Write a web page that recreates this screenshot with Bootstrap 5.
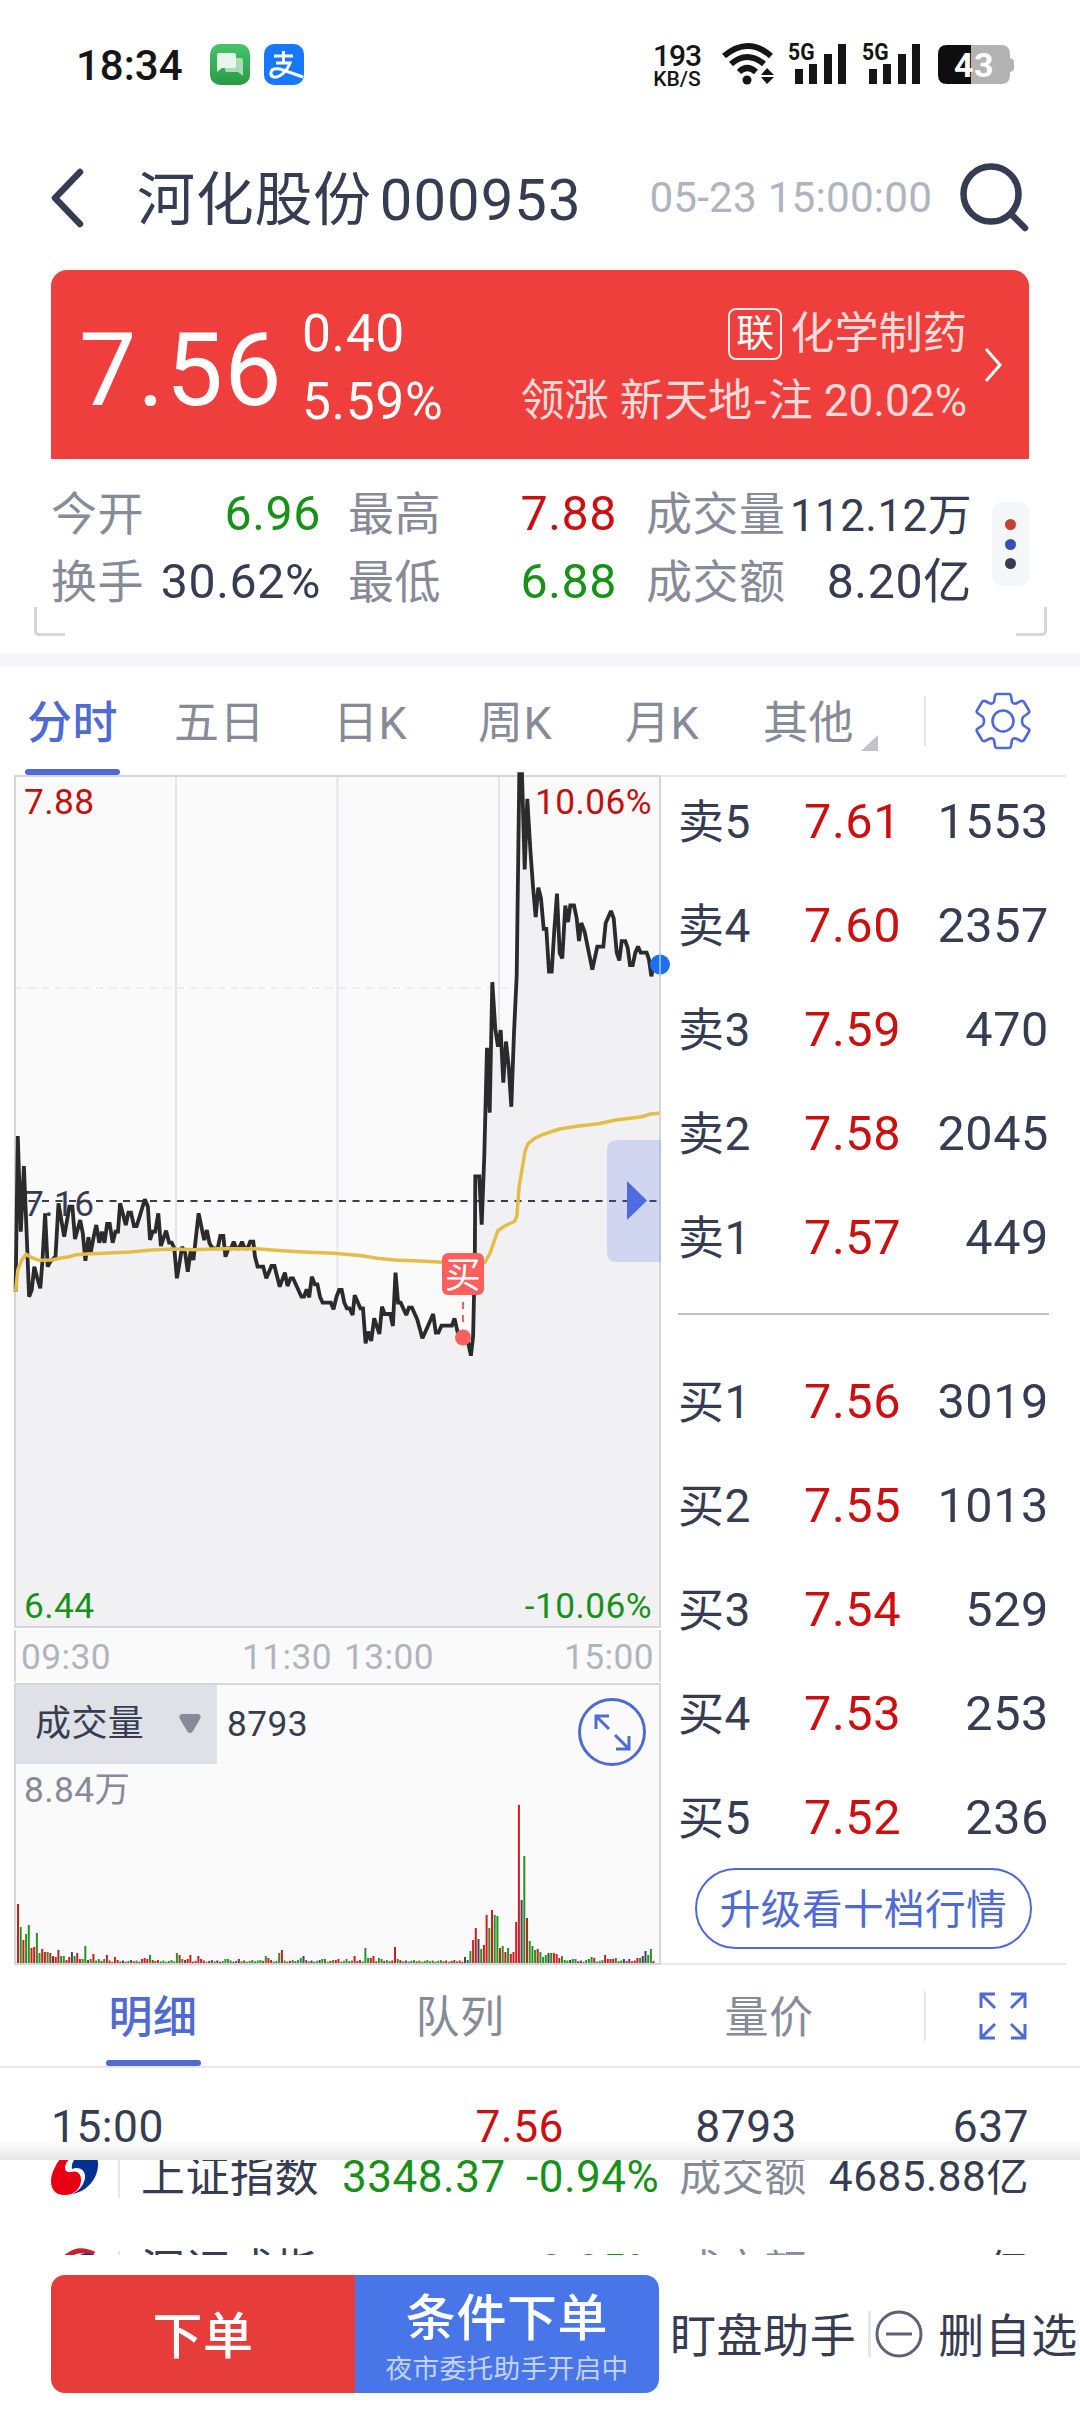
<!DOCTYPE html>
<html lang="zh-CN">
<head>
<meta charset="utf-8">
<meta name="viewport" content="width=device-width, initial-scale=1">
<title>河化股份 000953</title>
<link href="https://cdn.jsdelivr.net/npm/bootstrap@5.3.0/dist/css/bootstrap.min.css" rel="stylesheet">
<style>
:root{--ink:#363c52;--mute:#878b98;--pale:#b0b4be;--rise:#cd0f0f;--fall:#179117;--accent:#4f6bd3;}
*{letter-spacing:.012em}
body{width:1080px;height:2414px;overflow:hidden;background:#fff;color:var(--ink);font-family:Roboto,"Noto Sans CJK SC",sans-serif;font-size:45px;line-height:1;white-space:nowrap;}
svg{display:block;flex:none;overflow:visible}
svg text{font-family:Roboto,"Noto Sans CJK SC",sans-serif}
.c-rise{color:var(--rise)}.c-fall{color:var(--fall)}.c-mute{color:var(--mute)}.c-pale{color:var(--pale)}.c-accent{color:var(--accent)}
.statusbar{height:128px;padding:38px 63px 0 76px;color:#151515}
.clock{font:500 42px/55px Roboto,sans-serif;width:134px;letter-spacing:0}
.netrate{font:500 30px/26px Roboto,sans-serif;width:50px;padding-top:5px;margin-right:20px}
.netrate span{letter-spacing:-1px}
.netrate .unit{font-size:21px;line-height:21px;letter-spacing:0}
.titlebar{height:142px;padding:0 50px 3px 49px}
.stock-title{font-size:58px;margin-left:53px;width:513px;padding-top:4px}
.stock-title span{letter-spacing:.018em}
.stamp{font-size:42.3px;width:309px;letter-spacing:.004em;padding-top:1px}
.quote{height:189px;margin:0 51px;background:#ee3f3d;border-radius:16px 16px 0 0;padding:6px 25px 0 28px}
.price-now{font-size:102px;width:223px;padding-top:5px}
.price-diff{font-size:51.5px;line-height:68px}
.sector{font-size:44.2px;line-height:67px;color:rgba(255,255,255,.82);margin-right:17px}
.sector span{letter-spacing:0}
.link-tag{border:2px solid rgba(255,255,255,.9);border-radius:8px;width:54px;height:52px;font-size:38px;line-height:46px;margin:-1px 8px 0 0;color:#fff}
.facts{height:194px;padding:21px 51px 0;position:relative}
.facts .pair{font-size:48.3px;line-height:68px}
.facts .pair>span:first-child{font-size:46px;color:var(--mute)}
.fw-1{width:270px}.fw-2{width:269px;margin-left:27px}.fw-3{width:326px;margin-left:29px}
.morebox{width:37px;height:84px;border-radius:9px;background:#f4f6f8;margin:22px 0 0 20px;padding:17px 0}
.dotmark{width:11px;height:11px;border-radius:50%}
.bracket{position:absolute;bottom:17px;width:31px;height:29px;border:3px solid #d5d6dc;border-top:0}
.bracket.lf{left:34px;border-right:0;border-radius:0 0 0 5px}.bracket.rt{right:33px;border-left:0;border-radius:0 0 5px 0}
.band{height:14px;background:#f6f7f9}
.chart-tabs{height:108px;color:var(--mute);padding-left:27px;display:grid;grid-template-columns:147px 159px 145px 147px 138px 161px 52px 1fr;align-items:center}
.chart-tabs>span,.detail-tabs>span{height:100%;display:flex;align-items:center;justify-content:center;position:relative;padding-top:5px}
.chart-tabs>span{justify-content:start}
.picked{color:var(--accent);font-weight:500}
.picked::after{content:"";position:absolute;bottom:0;left:-2px;width:95px;height:6px;border-radius:3px;background:var(--accent)}
.vrule{width:2px;height:41px;background:#e6e7ea}
.market{height:1190px;padding:0 14px}
.left-pane{width:647px}
.times{height:52px;margin:2px 0 1px;border:solid #d5d6dc;border-width:0 2px;background:#fafafa;color:var(--pale);font-size:35.3px;padding:4px 5px 0 5px}
.volume{height:282px;border:2px solid #d5d6dc;background:#fafafa;position:relative}
.vol-pick{width:201px;height:79px;background:#e0e1e6;padding:0 16px 1px 19px;font-size:36px}
.vol-value{font-size:35.3px;margin-left:10px}
.vol-max{font-size:35.3px;left:8px;top:88px}
.book{width:405px;border-top:2px solid #e9e9ec;border-bottom:2px solid #e9e9ec}
.book ul{margin:0;padding:0 17px;list-style:none}
.book li{height:104px;display:flex;align-items:center;font-size:48.6px}
.book li>b{font-weight:400;font-size:46px;width:126px}
.book li>i{font-style:normal;flex:1}
.asks{margin-top:-7px!important}
.bids{margin-top:35px!important}
.book hr{margin:23px 17px 0;border:0;height:2px;background:#bfc1c8;opacity:1}
.upgrade{width:337px;height:81px;border:2px solid var(--accent);border-radius:41px;color:var(--accent);font-size:40.6px;margin:-2px 0 0 34px;padding-top:3px}
.detail-tabs{height:103px;border-bottom:2px solid #e9e9ec;display:grid;grid-template-columns:306px 308px 310px 2px 1fr;align-items:center;color:var(--mute);font-size:44px}
.detail-tabs .picked::after{left:106px}
.tick{height:92px;padding:25px 51px 0;position:relative;line-height:68px;font-size:44.3px}
.tick::after{content:"";position:absolute;left:0;right:0;bottom:0;height:18px;background:linear-gradient(rgba(245,245,246,.2),#e6e6e7)}
.indices{height:95px;overflow:hidden}
.index-row{height:96px;padding:0 51px;margin-top:-31px;font-size:44px}
.index-row>svg{margin-bottom:8px}
.index-row+.index-row{margin-top:-2px}
.index-row+.index-row>svg{margin-bottom:0}
.index-row>span{flex:none}
.footbar{height:159px;padding:20px 0 21px 51px;font-size:46px;font-weight:500}
.order-btn{width:304px;height:118px;color:#fff;font-size:50px}
.buy-now{background:#e63c3a;border-radius:14px 0 0 14px;padding-top:5px}
.cond-now{background:#4876e8;border-radius:0 14px 14px 0;padding-top:8px}
.cond-now small{font-size:26.7px;font-weight:400;color:#c3d2fa;margin-top:12px}
</style>
<script src="https://cdn.jsdelivr.net/npm/bootstrap@5.3.0/dist/js/bootstrap.bundle.min.js"></script>
</head>
<body>
<header>
  <div class="statusbar d-flex align-items-start">
    <span class="clock">18:34</span>
    <svg width="94" height="54" viewBox="210 38 94 54"><defs><linearGradient id="g1" x2="0" y2="1"><stop stop-color="#45c46b"/><stop offset="1" stop-color="#2a9a45"/></linearGradient></defs>
      <rect x="210" y="44" width="40" height="41" rx="10" fill="url(#g1)"/>
      <path d="M227 58h14q2 0 2 2v16l-5-4h-11q-2 0-2-2V60q0-2 2-2z" fill="#a9dcb5"/><path d="M219 53h15q2 0 2 2v11q0 2-2 2h-12l-5 4V55q0-2 2-2z" fill="#e6f6ea"/>
      <rect x="264" y="44" width="40" height="41" rx="10" fill="#1777ff"/>
      <path d="M274 56h19M283.500 51v12M276 63h14q-3 8-9 12c-6 4-11 2-10-3 1-4 7-4 12-2l20 7" fill="none" stroke="#fff" stroke-width="3"/></svg>
    <div class="netrate ms-auto text-center d-flex flex-column"><span>193</span><span class="unit">KB/S</span></div>
    <svg width="295" height="54" viewBox="722 38 295 54" fill="none" stroke="#151515">
      <path d="M724 56q24-20 47 0M731 64q16-14 33 0M739 72q8-8 17 0" stroke-width="6"/><circle cx="747" cy="80" r="4.500" fill="#151515" stroke="none"/>
      <path d="M761 75l6-7 7 7zM761 77l6 7 7-7z" fill="#151515" stroke="none"/>
      <g id="sig" stroke="none" fill="#151515"><text x="788" y="60" font-size="23" font-weight="700" textLength="27" lengthAdjust="spacingAndGlyphs">5G</text><rect x="795" y="69" width="8" height="15"/><rect x="809" y="64" width="8" height="20"/><rect x="824" y="54" width="8" height="30"/><rect x="838" y="44" width="8" height="40"/></g>
      <use href="#sig" x="74"/>
      <g stroke="none"><path d="M971 45h30q9 0 9 9v4q4 1 4 4v6q0 3-4 4v3q0 9-9 9h-30z" fill="#b3b3b3"/><path d="M971 45h-24q-9 0-9 9v21q0 9 9 9h24z" fill="#0e0e0e"/><text x="974" y="76.500" text-anchor="middle" fill="#fff" font-size="34" font-weight="700">43</text></g>
    </svg>
  </div>
  <div class="titlebar d-flex align-items-center">
    <svg width="35" height="60" viewBox="0 0 35 60"><path d="M31 4L6 30l25 26" fill="none" stroke="#363c52" stroke-width="6.500" stroke-linecap="round" stroke-linejoin="round"/></svg>
    <span class="stock-title">河化股份<span style="margin-left:8px">000953</span></span>
    <span class="stamp c-pale">05-23 15:00:00</span>
    <svg width="72" height="72" viewBox="0 0 72 72" fill="none" stroke="#363c52" stroke-width="6.500" stroke-linecap="round"><circle cx="33" cy="32" r="27.500"/><path d="M54 53l13 13"/></svg>
  </div>
</header>

<section class="quote d-flex align-items-center text-white">
  <span class="price-now">7.56</span>
  <div class="price-diff d-flex flex-column"><span>0.40</span><span>5.59%</span></div>
  <div class="sector ms-auto d-flex flex-column align-items-end"><span class="d-flex align-items-center"><span class="link-tag text-center">联</span>化学制药</span><span>领涨 新天地<span style="margin:0 2px">-</span>注 20.02%</span></div>
  <svg class="mb-2" width="20" height="36" viewBox="0 0 20 36"><path d="M2 3l14 16L2 35" fill="none" stroke="#fff" stroke-width="3"/></svg>
</section>

<section class="facts d-flex align-items-start">
  <div class="fw-1"><div class="pair d-flex justify-content-between"><span>今开</span><span class="c-fall">6.96</span></div><div class="pair d-flex justify-content-between"><span>换手</span><span>30.62%</span></div></div>
  <div class="fw-2"><div class="pair d-flex justify-content-between"><span>最高</span><span class="c-rise">7.88</span></div><div class="pair d-flex justify-content-between"><span>最低</span><span class="c-fall">6.88</span></div></div>
  <div class="fw-3"><div class="pair d-flex justify-content-between"><span>成交量</span><span style="font-size:43.800px;padding-top:2px;height:68px">112.12万</span></div><div class="pair d-flex justify-content-between"><span>成交额</span><span>8.20亿</span></div></div>
  <div class="morebox d-flex flex-column align-items-center justify-content-between"><span class="dotmark" style="background:#c8402f"></span><span class="dotmark" style="background:#3450b4"></span><span class="dotmark" style="background:#363c52"></span></div>
  <i class="bracket lf"></i><i class="bracket rt"></i>
</section>
<div class="band"></div>

<nav class="chart-tabs">
  <span class="picked">分时</span><span>五日</span><span>日K</span><span>周K</span><span>月K</span>
  <span>其他<svg class="position-absolute" style="left:98px;top:68px" width="17" height="16"><path d="M17 0v16H0z" fill="#c2c3c6"/></svg></span>
  <i class="vrule" style="height:50px"></i>
  <svg width="54" height="56" viewBox="-27 -28 54 56" fill="none" stroke="#4f6bd3" stroke-width="2.600" stroke-linejoin="round"><circle r="10.500"/><path d="M-6 -27H6Q7.500 -27 8 -25L9 -19Q10 -17 13 -17.500L18 -20Q20 -20.500 21 -19L26 -10.500Q27 -8.500 25 -7.500L20 -4Q18 0 20 4L25 7.500Q27 8.500 26 10.500L21 19Q20 20.500 18 20L13 17.500Q10 17 9 19L8 25Q7.500 27 6 27H-6Q-7.500 27 -8 25L-9 19Q-10 17 -13 17.500L-18 20Q-20 20.500 -21 19L-26 10.500Q-27 8.500 -25 7.500L-20 4Q-18 0 -20 -4L-25 -7.500Q-27 -8.500 -26 -10.500L-21 -19Q-20 -20.500 -18 -20L-13 -17.500Q-10 -17 -9 -19L-8 -25Q-7.500 -27 -6 -27Z"/></svg>
</nav>

<main class="market d-flex">
  <div class="left-pane">
    <svg id="plot" width="647" height="853" viewBox="14 775 647 853">
      <rect x="15" y="776" width="645" height="851" fill="#fafafa"/>
      <path d="M176 776V1627M337.500 776V1627M499 776V1627" stroke="#e4e5e8" stroke-width="2"/>
      <path d="M15 988H661" stroke="#ebecee" stroke-width="2" stroke-dasharray="7 6.500"/>
      <path id="area" fill="#f1f1f4"/>
      <rect x="15" y="776" width="645" height="851" fill="none" stroke="#d5d6dc" stroke-width="2"/>
      <text x="24" y="1216" font-size="35.300" fill="#363c52">7.16</text>
      <path d="M15 1201H661" stroke="#363c52" stroke-width="2" stroke-dasharray="7 6.500"/>
      <path id="trace" fill="none" stroke="#2b2b2b" stroke-width="3.800" stroke-linejoin="miter" stroke-miterlimit="2"/>
      <path id="avg" fill="none" stroke="#e3bd48" stroke-width="3.500"/>
      <rect x="442" y="1253" width="42" height="42" rx="6" fill="#fd5e5e"/>
      <text x="463" y="1288" text-anchor="middle" font-size="36" fill="#fff">买</text>
      <path d="M463 1302v22" stroke="#fd5e5e" stroke-width="2" stroke-dasharray="7 6"/><circle cx="463" cy="1337.500" r="8" fill="#fd5e5e"/>
      <circle cx="660" cy="964.500" r="10" fill="#1c6ff0"/><path d="M660 953V976" stroke="#a8c8f4" stroke-width="1.500"/>
      <path d="M661 1140H617q-10 0-10 10v102q0 10 10 10h44z" fill="#4f6be0" opacity=".2"/><path d="M627 1181v39l20-19.500z" fill="#4f6be0"/>
      <g font-size="35.300"><g fill="#c40f0f"><text x="24" y="814">7.88</text><text x="652" y="814" text-anchor="end">10.06%</text></g><g fill="#179117"><text x="24" y="1618">6.44</text><text x="652" y="1618" text-anchor="end">-10.06%</text></g></g>
    </svg>
    <div class="times d-flex align-items-center"><span>09:30</span><span style="margin-left:131px">11:30</span><span style="margin-left:12px">13:00</span><span class="ms-auto">15:00</span></div>
    <div class="volume">
      <div class="d-flex align-items-center"><div class="vol-pick d-flex align-items-center justify-content-between"><span>成交量</span><svg width="22" height="20"><path d="M3 0h16q4 1 2 5L14 17q-3 4-6 0L1 5Q-1 1 3 0z" fill="#878b98"/></svg></div><span class="vol-value">8793</span>
      <svg class="position-absolute" style="left:562px;top:13px" width="68" height="68" viewBox="-34 -34 68 68" fill="none" stroke="#4f6bd3" stroke-width="3"><circle r="32.500"/><path d="M-3 -3L-16 -16M-16 -3V-16H-3M3 3L17 17M17 4V17H4"/></svg></div>
      <span class="vol-max c-mute position-absolute">8.84万</span>
      <svg id="bars" class="position-absolute" style="left:0;bottom:0" width="643" height="170" viewBox="16 1794 643 170"></svg>
    </div>
  </div>
  <aside class="book">
    <ul class="asks">
      <li><b>卖5</b><i class="c-rise">7.61</i><span>1553</span></li><li><b>卖4</b><i class="c-rise">7.60</i><span>2357</span></li><li><b>卖3</b><i class="c-rise">7.59</i><span>470</span></li><li><b>卖2</b><i class="c-rise">7.58</i><span>2045</span></li><li><b>卖1</b><i class="c-rise">7.57</i><span>449</span></li>
    </ul>
    <hr>
    <ul class="bids">
      <li><b>买1</b><i class="c-rise">7.56</i><span>3019</span></li><li><b>买2</b><i class="c-rise">7.55</i><span>1013</span></li><li><b>买3</b><i class="c-rise">7.54</i><span>529</span></li><li><b>买4</b><i class="c-rise">7.53</i><span>253</span></li><li><b>买5</b><i class="c-rise">7.52</i><span>236</span></li>
    </ul>
    <div class="upgrade d-flex align-items-center justify-content-center">升级看十档行情</div>
  </aside>
</main>

<nav class="detail-tabs">
  <span class="picked">明细</span><span>队列</span><span>量价</span><i class="vrule" style="height:50px"></i>
  <svg class="ms-auto" style="margin-right:53px" width="48" height="48" fill="none" stroke="#4f6bd3" stroke-width="3"><path d="M2 16V2H16M2 2L16 16M32 2H46V16M46 2L32 16M2 32V46H16M2 46L16 32M32 46H46V32M46 46L32 32"/></svg>
</nav>
<div class="tick d-flex"><span style="width:309px">15:00</span><span class="c-rise text-end" style="width:204px">7.56</span><span class="text-end" style="width:233px">8793</span><span class="ms-auto">637</span></div>
<section class="indices">
  <div class="index-row d-flex align-items-center"><svg width="47" height="46" viewBox="0 0 47 46"><path d="M38 2C26-1 10 3 4 17-3 30-1 44 12 45c10 1 18-6 18-15 0-6-3-10-10-8-6 1-8-4-4-10C20 6 29 3 38 2z" fill="#e60012"/><path d="M21 44c14-2 25-14 26-28C48 4 38-1 29 4c-6 4-9 10-8 15 7-3 14 1 13 9-1 7-6 13-13 16z" fill="#06308f"/></svg><i class="vrule" style="margin:0 21px 0 20px"></i><span style="width:201px">上证指数</span><span class="c-fall" style="width:184px">3348.37</span><span class="c-fall">-0.94%</span><span class="c-mute ms-auto" style="font-size:42px">成交额</span><span style="margin-left:22px;font-size:42.300px">4685.88亿</span></div>
  <div class="index-row d-flex align-items-center"><svg width="47" height="46" viewBox="0 0 47 46" fill="none"><path d="M18 7Q28-1 43 6" stroke="#c8202b" stroke-width="5"/><path d="M28 10Q38 5 45 12V22" stroke="#06308f" stroke-width="5"/><path d="M18 7Q6 14 3 28" stroke="#c8202b" stroke-width="5"/></svg><i class="vrule" style="margin:0 21px 0 20px"></i><span style="width:201px">深证成指</span><span class="c-fall" style="width:184px;font-size:41px">10132.41</span><span class="c-fall">-0.85%</span><span class="c-mute ms-auto" style="font-size:42px">成交额</span><span style="margin-left:22px;font-size:42.300px">4870.61亿</span></div>
</section>

<footer class="footbar d-flex align-items-center">
  <div class="order-btn buy-now d-flex align-items-center justify-content-center">下单</div>
  <div class="order-btn cond-now d-flex flex-column align-items-center justify-content-center">条件下单<small>夜市委托助手开启中</small></div>
  <span style="margin-left:11px;padding-top:4px;font-weight:400">盯盘助手</span><i class="vrule" style="margin:0 4px 0 12px;width:3px;height:46px"></i>
  <svg width="48" height="48" fill="none" stroke="#5d6274" stroke-width="3"><circle cx="24" cy="24" r="22"/><path d="M11 24h26"/></svg>
  <span style="margin-left:15px;padding-top:4px;font-weight:400">删自选</span>
</footer>

<script>
// Price trace: morning and midday session, then the afternoon spike.
const early='36,695 41,228 48,515 55,318 62,540 67,710 73,690 79,620 86,655 93,685 98,600 104,460 110,620 116,605 128,590 135,430 148,530 160,440 167,440 173,537 185,480 191,520 197,602 204,532 209,580 216,530 222,495 229,548 235,515 241,548 247,492 253,492 260,548 266,515 272,515 277,430 290,495 296,458 302,458 309,498 315,498 322,470 334,418 341,440 346,540 352,515 358,515 365,460 371,558 383,512 390,548 396,548 402,565 408,655 414,610 420,560 427,580 433,635 440,570 446,600 458,460 471,540 477,510 483,550 490,565 502,565 508,528 515,528 520,590 527,565 533,565 539,545 545,565 551,565 558,545 564,565 571,565 577,545 584,545 588,590 594,620 607,620 614,655 626,618 633,618 645,680 657,638 663,678 670,655 676,655 695,710 701,710 707,688 713,712 719,650 726,673 732,673 738,710 744,728 763,728 769,748 776,710 782,690 788,690 794,728 800,745 806,745 813,765 818,706 831,745 837,745 843,850 849,815 856,843 863,775 875,822 881,740 887,762 900,762 906,798 912,638 918,728 924,728 937,765 943,743 950,743 962,778 974,835 981,815 999,762 1005,818 1011,818 1018,797 1042,797 1048,775 1055,815 1067,833 1080,850 1086,887 1091,830 1095,600';
const late='106,1053 118,1053 125,1175 133,1000 141,728 149,892 157,562 166,680 174,725 182,683 190,816 198,712 206,775 214,877 222,690 230,545 238,36 246,36 254,277 262,98 271,225 279,320 287,397 295,323 303,350 311,427 319,427 327,535 335,535 343,430 351,338 359,488 367,502 376,368 384,410 391,368 402,368 410,400 417,458 424,412 434,435 445,480 457,530 472,472 490,472 497,412 513,382 521,400 530,487 538,507 545,458 556,458 563,475 570,519 578,519 586,487 594,472 602,487 620,487 627,505 634,547 642,515 660,517';
const mean='36,695 41,630 50,600 60,583 72,592 90,601 120,600 140,594 160,590 175,584 200,582 240,580 300,576 350,570 400,567 450,569 500,566 590,566 650,572 700,576 770,580 835,587 870,595 910,600 980,604 1020,607 1110,610 1118,608 1130,580 1148,512 1165,497 1187,484 1192,468 1197,380 1205,320 1211,272 1217,252 1230,238 1248,225 1290,207 1330,199 1380,191 1420,180 1480,170 1500,162 1520,160';
const place=(s,ox,oy,kx,ky)=>s.split(' ').map(p=>{const [x,y]=p.split(',').map(Number);return (ox+x/kx).toFixed(1)+' '+(oy+y/ky).toFixed(1)});
const line=place(early,0,1060,2.306,3).concat(place(late,440,760,3,2.529));
document.getElementById('trace').setAttribute('d','M'+line.join('L'));
document.getElementById('area').setAttribute('d','M'+line.join('L')+'L659 1626L16 1626Z');
document.getElementById('avg').setAttribute('d','M'+place(mean,0,1060,2.306,3).join('L'));

// Volume bars, one per minute: minute -> height and colour.
const vol='0:59r 1:36g 2:23r 3:29g 4:38g 5:15r 6:16r 7:30g 8:10g 9:14r 10:11r 11:11g 12:10r 13:7k 14:6r 15:13r 16:7g 17:7g 18:3r 19:6r 20:11k 21:7g 22:10r 23:4r 24:4g 25:17g 26:3r 27:4g 28:9r 30:4g 32:4g 33:8r 36:6r 37:3r 46:4r 47:5r 48:4r 49:8g 50:3r 59:10g 60:8r 61:4g 62:3r 63:4r 64:8r 67:7r 68:4r 77:4g 78:4g 82:4k 90:3g 92:7g 93:5r 94:3r 97:10g 98:13r 104:3g 105:5g 106:7k 113:4g 114:4g 118:3r 119:4r 122:4g 125:7r 129:15g 130:5g 131:5r 132:7r 134:5g 135:4g 140:16r 141:4g 166:6k 168:12g 169:23r 170:35r 171:24k 172:14g 173:18r 174:48r 175:35g 176:53r 177:48g 178:47g 179:15r 180:17g 181:11r 182:15g 183:9r 184:11r 185:41r 186:158r 187:63k 188:107g 189:45r 190:22g 191:17g 192:13g 193:14r 194:11g 195:6g 196:8g 197:10k 198:10g 199:10r 200:9r 201:5r 202:7g 203:3g 205:3k 206:4g 207:4g 211:3g 212:4g 213:6g 214:5r 218:8r 219:4r 220:4r 221:4r 222:5g 225:4k 227:4k 230:5r 231:5g 232:7k 233:12k 234:8g 235:14g 236:2r';
const known=Object.fromEntries(vol.split(' ').map(v=>v.split(':')));
const shade={r:'#cf1d1d',g:'#259425',k:'#41465c'};
let out='';
for(let i=0;i<237;i++){const v=known[i]||(1.3+(i*7%5)*.4)+'grrgkrgg'[(i*5+(i>>2))%8];out+=`<rect x="${(17+i*2.693).toFixed(1)}" y="${1964-parseFloat(v)}" width="2" height="${parseFloat(v)}" fill="${shade[v.slice(-1)]}"/>`}
document.getElementById('bars').innerHTML=out;
</script>
</body>
</html>
